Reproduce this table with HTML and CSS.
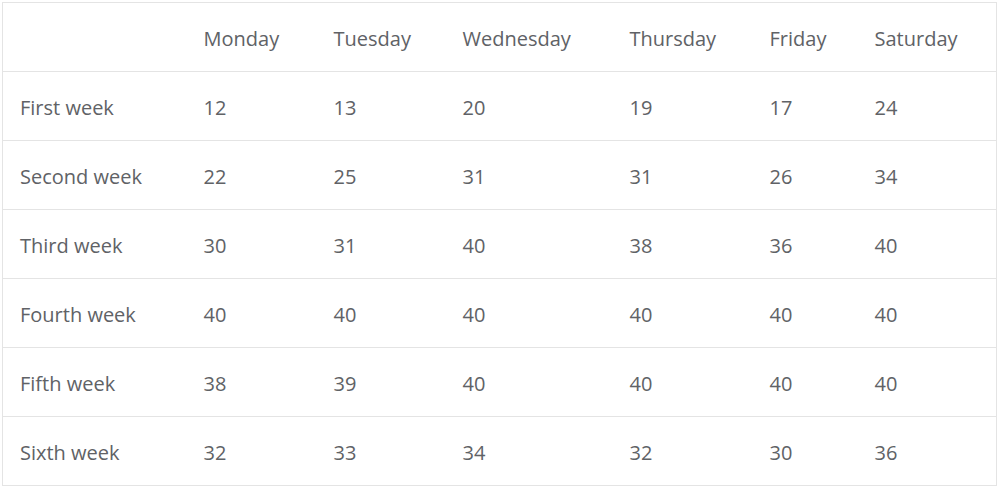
FILE: index.html
```html
<!DOCTYPE html>
<html>
<head>
<meta charset="utf-8">
<link rel="stylesheet" href="styles.css">
</head>
<body>
<table class="grid">
  <colgroup>
    <col class="c0"><col class="c1"><col class="c2"><col class="c3"><col class="c4"><col class="c5"><col class="c6">
  </colgroup>
  <thead>
    <tr><th></th><th>Monday</th><th>Tuesday</th><th>Wednesday</th><th>Thursday</th><th>Friday</th><th>Saturday</th></tr>
  </thead>
  <tbody>
    <tr><td>First week</td><td>12</td><td>13</td><td>20</td><td>19</td><td>17</td><td>24</td></tr>
    <tr><td>Second week</td><td>22</td><td>25</td><td>31</td><td>31</td><td>26</td><td>34</td></tr>
    <tr><td>Third week</td><td>30</td><td>31</td><td>40</td><td>38</td><td>36</td><td>40</td></tr>
    <tr><td>Fourth week</td><td>40</td><td>40</td><td>40</td><td>40</td><td>40</td><td>40</td></tr>
    <tr><td>Fifth week</td><td>38</td><td>39</td><td>40</td><td>40</td><td>40</td><td>40</td></tr>
    <tr><td>Sixth week</td><td>32</td><td>33</td><td>34</td><td>32</td><td>30</td><td>36</td></tr>
  </tbody>
</table>
</body>
</html>
```
FILE: styles.css
```css
html, body {
  margin: 0;
  padding: 0;
  background: #ffffff;
}
body {
  padding: 2px 0 0 2px;
  font-family: "Open Sans", "Noto Sans", "Liberation Sans", sans-serif;
  color: #606266;
}
.grid {
  table-layout: fixed;
  border-collapse: collapse;
  width: 994px;
  border: 1px solid #e4e4e4;
}
.c0 { width: 184px; }
.c1 { width: 130px; }
.c2 { width: 129px; }
.c3 { width: 167px; }
.c4 { width: 140px; }
.c5 { width: 105px; }
.c6 { width: 139px; }
.grid th, .grid td {
  height: 66px;
  padding: 2px 0 0 17px;
  text-align: left;
  vertical-align: middle;
  font-weight: 400;
  font-size: 20px;
  border-bottom: 1px solid #e4e4e4;
  white-space: nowrap;
}
```
